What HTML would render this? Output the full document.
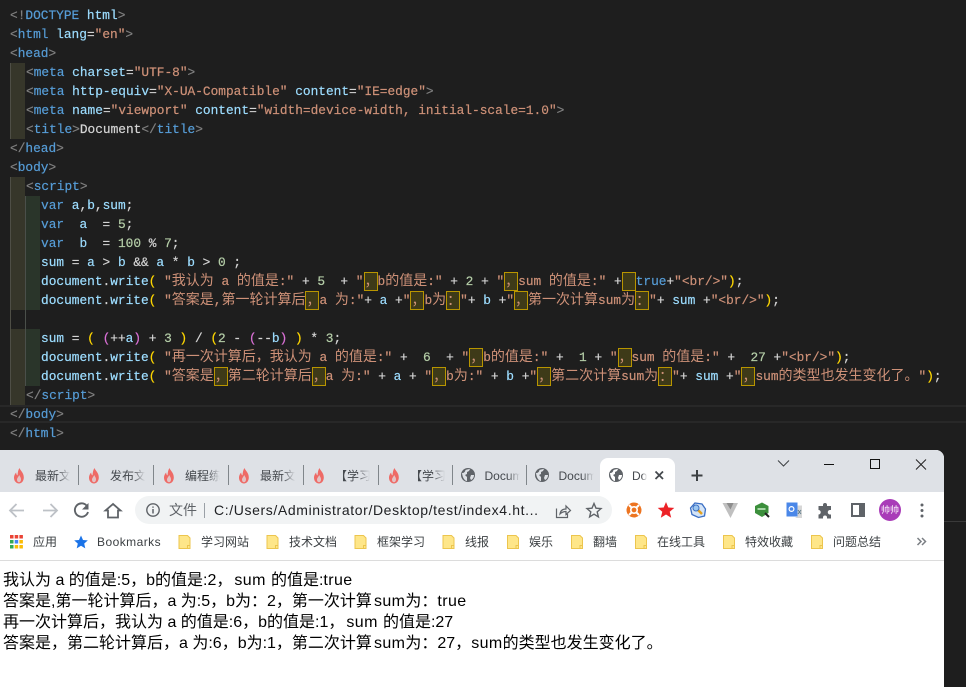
<!DOCTYPE html>
<html lang="zh"><head><meta charset="utf-8"><title>Document</title>
<style>
html,body{margin:0;padding:0;background:#1e1e1e}
#r{position:relative;width:966px;height:687px;overflow:hidden;background:#1e1e1e}
.a{position:absolute}
.l{position:absolute;white-space:pre;height:19px;line-height:19px;font-family:"Liberation Mono","Noto Sans CJK SC",monospace;font-size:12.825px;color:#d4d4d4;-webkit-text-stroke:.2px}
.l i{font-style:normal}
em{font-style:normal;font-size:14px;font-family:"Noto Sans CJK SC",sans-serif;line-height:0;-webkit-text-stroke:0}
.g{color:#808080}.t{color:#569cd6}.n{color:#9cdcfe}.s{color:#ce9178}.w{color:#d4d4d4}.d{color:#b5cea8}.y{color:#ffd700}.p{color:#da70d6}.u{color:#179fff}
.x{display:inline-block;box-sizing:border-box;width:14px;height:19px;border:1px solid #b89500;background:#3e3a18;vertical-align:top;font-size:14px;line-height:16px;text-align:left;overflow:hidden;font-family:"Noto Sans CJK SC",sans-serif;color:#ce9178;-webkit-text-stroke:0}
.ui{font-family:"Liberation Sans","Noto Sans CJK SC",sans-serif;white-space:pre;position:absolute}
.tb{font-size:12px;color:#45494e;top:468px;height:16px;line-height:16px;overflow:hidden;-webkit-mask-image:linear-gradient(90deg,#000 65%,transparent);mask-image:linear-gradient(90deg,#000 65%,transparent)}
.sep{position:absolute;top:465px;width:1px;height:20px;background:#80868b}
.bm{font-size:12px;color:#3c4043;top:534px;line-height:16px}
.ct{position:absolute;left:3px;font-family:"Liberation Sans","Noto Sans CJK SC",sans-serif;font-size:16px;line-height:21px;color:#000;white-space:pre}
.ct b{font-weight:normal;letter-spacing:.4px}
.ct b.m{margin-left:2px}
.ct b.e{margin-right:.7px}
svg{position:absolute;overflow:visible}
</style></head><body><div id="r">

<div class="a" style="left:10px;top:63px;width:15px;height:76px;background:#36362a"></div>
<div class="a" style="left:10px;top:177px;width:15px;height:133px;background:#36362a"></div>
<div class="a" style="left:10px;top:329px;width:15px;height:76px;background:#36362a"></div>
<div class="a" style="left:25px;top:196px;width:15px;height:114px;background:#2a352a"></div>
<div class="a" style="left:25px;top:329px;width:15px;height:57px;background:#2a352a"></div>
<div class="a" style="left:10px;top:63px;width:1px;height:76px;background:#4e4e46"></div>
<div class="a" style="left:10px;top:177px;width:1px;height:228px;background:#4e4e46"></div>
<div class="a" style="left:25px;top:196px;width:1px;height:190px;background:#4a4f4a"></div>
<div class="a" style="left:0;top:405px;width:966px;height:18px;box-sizing:border-box;border-top:2px solid #282828;border-bottom:2px solid #282828"></div>

<div class="l" style="left:10px;top:6px"><i class=g>&lt;!</i><i class=t>DOCTYPE</i> <i class=n>html</i><i class=g>&gt;</i></div>
<div class="l" style="left:10px;top:25px"><i class=g>&lt;</i><i class=t>html</i> <i class=n>lang</i>=<i class=s>"en"</i><i class=g>&gt;</i></div>
<div class="l" style="left:10px;top:44px"><i class=g>&lt;</i><i class=t>head</i><i class=g>&gt;</i></div>
<div class="l" style="left:26px;top:63px"><i class=g>&lt;</i><i class=t>meta</i> <i class=n>charset</i>=<i class=s>"UTF-8"</i><i class=g>&gt;</i></div>
<div class="l" style="left:26px;top:82px"><i class=g>&lt;</i><i class=t>meta</i> <i class=n>http-equiv</i>=<i class=s>"X-UA-Compatible"</i> <i class=n>content</i>=<i class=s>"IE=edge"</i><i class=g>&gt;</i></div>
<div class="l" style="left:26px;top:101px"><i class=g>&lt;</i><i class=t>meta</i> <i class=n>name</i>=<i class=s>"viewport"</i> <i class=n>content</i>=<i class=s>"width=device-width, initial-scale=1.0"</i><i class=g>&gt;</i></div>
<div class="l" style="left:26px;top:120px"><i class=g>&lt;</i><i class=t>title</i><i class=g>&gt;</i>Document<i class=g>&lt;/</i><i class=t>title</i><i class=g>&gt;</i></div>
<div class="l" style="left:10px;top:139px"><i class=g>&lt;/</i><i class=t>head</i><i class=g>&gt;</i></div>
<div class="l" style="left:10px;top:158px"><i class=g>&lt;</i><i class=t>body</i><i class=g>&gt;</i></div>
<div class="l" style="left:26px;top:177px"><i class=g>&lt;</i><i class=t>script</i><i class=g>&gt;</i></div>
<div class="l" style="left:41px;top:196px"><i class=t>var</i> <i class=n>a</i>,<i class=n>b</i>,<i class=n>sum</i>;</div>
<div class="l" style="left:41px;top:215px"><i class=t>var</i>  <i class=n>a</i>  = <i class=d>5</i>;</div>
<div class="l" style="left:41px;top:234px"><i class=t>var</i>  <i class=n>b</i>  = <i class=d>100</i> % <i class=d>7</i>;</div>
<div class="l" style="left:41px;top:253px"><i class=n>sum</i> = <i class=n>a</i> &gt; <i class=n>b</i> &amp;&amp; <i class=n>a</i> * <i class=n>b</i> &gt; <i class=d>0</i> ;</div>
<div class="l" style="left:41px;top:272px"><i class=n>document</i>.<i class=n>write</i><i class=y>(</i> <i class=s>"<em>我认为</em> a <em>的值是</em>:"</i> + <i class=d>5</i>  + <i class=s>"<span class=x>，</span>b<em>的值是</em>:"</i> + <i class=d>2</i> + <i class=s>"<span class=x>，</span>sum <em>的值是</em>:"</i> +<span class=x></span><i class=t>true</i>+<i class=s>"&lt;br/&gt;"</i><i class=y>)</i>;</div>
<div class="l" style="left:41px;top:291px"><i class=n>document</i>.<i class=n>write</i><i class=y>(</i> <i class=s>"<em>答案是</em>,<em>第一轮计算后</em><span class=x>，</span>a <em>为</em>:"</i>+ <i class=n>a</i> +<i class=s>"<span class=x>，</span>b<em>为</em><span class=x>：</span>"</i>+ <i class=n>b</i> +<i class=s>"<span class=x>，</span><em>第一次计算</em>sum<em>为</em><span class=x>：</span>"</i>+ <i class=n>sum</i> +<i class=s>"&lt;br/&gt;"</i><i class=y>)</i>;</div>
<div class="l" style="left:41px;top:329px"><i class=n>sum</i> = <i class=y>(</i> <i class=p>(</i>++<i class=n>a</i><i class=p>)</i> + <i class=d>3</i> <i class=y>)</i> / <i class=y>(</i><i class=d>2</i> - <i class=p>(</i>--<i class=n>b</i><i class=p>)</i> <i class=y>)</i> * <i class=d>3</i>;</div>
<div class="l" style="left:41px;top:348px"><i class=n>document</i>.<i class=n>write</i><i class=y>(</i> <i class=s>"<em>再一次计算后，我认为</em> a <em>的值是</em>:"</i> +  <i class=d>6</i>  + <i class=s>"<span class=x>，</span>b<em>的值是</em>:"</i> +  <i class=d>1</i> + <i class=s>"<span class=x>，</span>sum <em>的值是</em>:"</i> +  <i class=d>27</i> +<i class=s>"&lt;br/&gt;"</i><i class=y>)</i>;</div>
<div class="l" style="left:41px;top:367px"><i class=n>document</i>.<i class=n>write</i><i class=y>(</i> <i class=s>"<em>答案是</em><span class=x>，</span><em>第二轮计算后</em><span class=x>，</span>a <em>为</em>:"</i> + <i class=n>a</i> + <i class=s>"<span class=x>，</span>b<em>为</em>:"</i> + <i class=n>b</i> +<i class=s>"<span class=x>，</span><em>第二次计算</em>sum<em>为</em><span class=x>：</span>"</i>+ <i class=n>sum</i> +<i class=s>"<span class=x>，</span>sum<em>的类型也发生变化了。</em>"</i><i class=y>)</i>;</div>
<div class="l" style="left:26px;top:386px"><i class=g>&lt;/</i><i class=t>script</i><i class=g>&gt;</i></div>
<div class="l" style="left:10px;top:405px"><i class=g>&lt;/</i><i class=t>body</i><i class=g>&gt;</i></div>
<div class="l" style="left:10px;top:424px"><i class=g>&lt;/</i><i class=t>html</i><i class=g>&gt;</i></div>

<div class="a" style="left:944px;top:521px;width:22px;height:1px;background:#3a3a3a"></div>

<!-- browser -->
<div class="a" style="left:0;top:450px;width:944px;height:237px;background:#fff;border-radius:0 8px 0 0;overflow:hidden">
  <div class="a" style="left:0;top:0;width:944px;height:42px;background:#dee1e6"></div>
</div>
<div class="a" style="left:600px;top:458px;width:75px;height:34px;background:#fff;border-radius:8px 8px 0 0"></div>
<div class="a" style="left:135px;top:496px;width:477px;height:28px;background:#f1f3f4;border-radius:14px"></div>
<div class="a" style="left:0;top:560px;width:944px;height:1px;background:#dcdcdc"></div>

<!-- tabs -->
<svg style="left:0;top:0" width="966" height="687">
<defs>
<g id="fl"><path d="M0.5-8C1.5-5 4.8-3.5 4.8 1.5 4.8 5 2.6 7.5 0 7.5-2.8 7.5-5 5-5 1.8-5-.5-3.8-2.5-2.8-3.5-2.8-2-2.3-1-1.5-.6-1.2-3.5-1-6 .5-8Z" fill="#ee6a66"/><path d="M.2-1C1 .5 2 1.6 2 3.4 2 5 1.2 6.2 0 6.2-1.2 6.2-2 5-2 3.6-2 2-.6 1 .2-1Z" fill="#dee1e6" opacity=".75"/></g>
<g id="gl"><circle r="7" fill="#5f6368"/><path d="M-6-2C-4-2-3-3-2.5-5-1-5.5.5-6 2-6L1-4-1-3-1-1-3 0-1 2-1 6C-3 6-5.500 3-6-2ZM3 0 6 0C6 2 5 4 3 5L2 3Z" fill="#dee1e6"/></g>
<g id="fd"><path d="M-5.500-6.500H3L5.500-4V6.500H-5.500Z" fill="#fee689" stroke="#ecc54e" stroke-width="1"/><rect x="3" y="3.500" width="2.500" height="3" fill="none" stroke="#ecc54e" stroke-width="1"/></g>
</defs>
<use href="#fl" x="19" y="476"/><use href="#fl" x="94" y="476"/><use href="#fl" x="169" y="476"/><use href="#fl" x="244" y="476"/><use href="#fl" x="319" y="476"/><use href="#fl" x="394" y="476"/>
<use href="#gl" x="468" y="475"/><use href="#gl" x="542" y="475"/>
<g transform="translate(616 475)"><circle r="7" fill="#5f6368"/><path d="M-6-2C-4-2-3-3-2.500-5-1-5.500.5-6 2-6L1-4-1-3-1-1-3 0-1 2-1 6C-3 6-5.500 3-6-2ZM3 0 6 0C6 2 5 4 3 5L2 3Z" fill="#fff"/></g>
<path d="M655.500 471.500l7.500 7.500M663 471.500l-7.500 7.500" stroke="#45494e" stroke-width="1.800" fill="none"/>
<path d="M697 470v11M691.500 475.500h11" stroke="#3c4043" stroke-width="2" fill="none"/>
<path d="M778 460.500l5.500 5.500 5.500-5.500" stroke="#3c4043" stroke-width="1" fill="none"/>
<path d="M824 464.500h10" stroke="#111" stroke-width="1" fill="none"/>
<rect x="870.500" y="459.500" width="9" height="9" fill="none" stroke="#111" stroke-width="1"/>
<path d="M916 459.500l10 10M926 459.500l-10 10" stroke="#222" stroke-width="1" fill="none"/>

<!-- nav -->
<path d="M24 510.500H11M16.500 504l-6.500 6.500 6.500 6.500" stroke="#bdc1c6" stroke-width="1.800" fill="none"/>
<path d="M43 510.500H56M50.500 504l6.500 6.500-6.500 6.500" stroke="#bdc1c6" stroke-width="1.800" fill="none"/>
<path d="M86.500 505.500A6.700 6.700 0 1 0 88 512" stroke="#5f6368" stroke-width="1.900" fill="none"/><path d="M88.500 503v6.500H82Z" fill="#5f6368"/>
<path d="M113 504l-7.500 6.500H108v7h10v-7h2.500Z" fill="none" stroke="#5f6368" stroke-width="1.800"/>
<circle cx="153" cy="510" r="6.200" fill="none" stroke="#5f6368" stroke-width="1.400"/><path d="M153 509v4.500M153 506.500v1.200" stroke="#5f6368" stroke-width="1.500"/>
<path d="M204.500 503v15" stroke="#9aa0a6" stroke-width="1"/>
<path d="M556.500 508.500v9h11v-3.500M560 514c.5-3.500 3-5 6-5v-3l4.500 4.500-4.500 4v-3c-2.500 0-4.500 1-6 2.500Z" fill="none" stroke="#5f6368" stroke-width="1.200"/>
<path d="M594 503.500l2 4.700 5 .4-3.800 3.300 1.200 5-4.400-2.700-4.400 2.700 1.200-5-3.800-3.300 5-.4Z" fill="none" stroke="#5f6368" stroke-width="1.400"/>

<!-- extensions -->
<circle cx="634" cy="510" r="7.500" fill="#ed7420"/><circle cx="634" cy="510" r="3.200" fill="none" stroke="#fff" stroke-width="1.600"/><path d="M629 505l2.500 2.500M639 505l-2.500 2.500M629 515l2.500-2.500M639 515l-2.500-2.500" stroke="#fff" stroke-width="2"/>
<path d="M666 502l2.300 5.500 6 .4-4.600 3.900 1.500 5.900-5.200-3.200-5.200 3.200 1.500-5.900-4.600-3.900 6-.4Z" fill="#ec2227"/>
<path d="M695 503l7 1 3.500 5-1 7-6 1.500-6.500-3-1.500-6.500Z" fill="#d4e4f7" stroke="#3b6fc4" stroke-width="1.300"/><path d="M698 510l4 4" stroke="#e3a11e" stroke-width="2.500"/><circle cx="696" cy="508" r="3" fill="#9cc7f0" stroke="#3b6fc4"/>
<path d="M722.500 503H738L730.500 518Z" fill="#c0c0c0"/><path d="M726.500 503h7l-3 6.500Z" fill="#8d8d8d"/>
<path d="M762 502.500l6.500 3.500v7l-6.500 4-7-4v-7Z" fill="#3c8f3c"/><path d="M757.500 509h8" stroke="#a6d6a6" stroke-width="2"/><path d="M765 513l4 4" stroke="#222" stroke-width="2"/>
<rect x="786.500" y="502.500" width="11" height="14" fill="#4a87e8"/><path d="M797.500 505.500h4.500v12.500h-7l2.500-1.500Z" fill="#d7d7d7"/><circle cx="791.500" cy="509" r="2.400" fill="none" stroke="#fff" stroke-width="1.200"/><path d="M798 510l3 4M801 510l-3 4" stroke="#607d8b" stroke-width="1"/>
<path d="M819 506h4v-1a2 2 0 0 1 4 0v1h4v4h-1a2.200 2.200 0 0 0 0 4.500h1v4h-4v-1a2 2 0 0 0-4 0v1h-4.500v-4a2.200 2.200 0 0 0 0-4.500V506Z" fill="#5f6368"/>
<rect x="852" y="504" width="12" height="12" fill="#fff" stroke="#5f6368" stroke-width="2"/><rect x="859" y="504" width="5" height="12" fill="#5f6368"/>
<circle cx="890" cy="510" r="11" fill="#a93cb8"/>
<circle cx="922" cy="505" r="1.500" fill="#5f6368"/><circle cx="922" cy="510.500" r="1.500" fill="#5f6368"/><circle cx="922" cy="516" r="1.500" fill="#5f6368"/>

<!-- bookmarks -->
<g><rect x="10" y="535" width="3.500" height="3.500" fill="#ea4335"/><rect x="14.700" y="535" width="3.500" height="3.500" fill="#ea4335"/><rect x="19.400" y="535" width="3.500" height="3.500" fill="#ea4335"/>
<rect x="10" y="540" width="3.500" height="3.500" fill="#34a853"/><rect x="14.700" y="540" width="3.500" height="3.500" fill="#4285f4"/><rect x="19.400" y="540" width="3.500" height="3.500" fill="#fbbc05"/>
<rect x="10" y="545" width="3.500" height="3.500" fill="#34a853"/><rect x="14.700" y="545" width="3.500" height="3.500" fill="#fbbc05"/><rect x="19.400" y="545" width="3.500" height="3.500" fill="#fbbc05"/></g>
<path d="M81 535.500l2 4.500 4.800.4-3.600 3.200 1.100 4.800-4.300-2.600-4.300 2.600 1.100-4.800-3.600-3.200 4.800-.4Z" fill="#1a73e8"/>
<use href="#fd" x="184.500" y="542"/><use href="#fd" x="272.500" y="542"/><use href="#fd" x="360.500" y="542"/><use href="#fd" x="448.500" y="542"/><use href="#fd" x="513" y="542"/><use href="#fd" x="577" y="542"/><use href="#fd" x="641" y="542"/><use href="#fd" x="729" y="542"/><use href="#fd" x="817" y="542"/>
<path d="M917.500 538l3.500 3.500-3.500 3.500M922 538l3.500 3.500-3.500 3.500" stroke="#7b7f84" stroke-width="1.500" fill="none"/>
</svg>

<div class="ui tb" style="left:35px;width:35px">最新文章</div><div class="sep" style="left:78px"></div>
<div class="ui tb" style="left:110px;width:35px">发布文章</div><div class="sep" style="left:153px"></div>
<div class="ui tb" style="left:185px;width:35px">编程练习</div><div class="sep" style="left:228px"></div>
<div class="ui tb" style="left:260px;width:35px">最新文章</div><div class="sep" style="left:303px"></div>
<div class="ui tb" style="left:335px;width:35px">【学习笔记</div><div class="sep" style="left:378px"></div>
<div class="ui tb" style="left:410px;width:35px">【学习笔记</div><div class="sep" style="left:452px"></div>
<div class="ui tb" style="left:484.500px;width:35px">Document</div><div class="sep" style="left:526px"></div>
<div class="ui tb" style="left:558.500px;width:35px">Document</div>
<div class="ui tb" style="left:632px;width:15px">Document</div>

<div class="ui" style="left:169px;top:502px;font-size:14px;line-height:16px;color:#5f6368">文件</div>
<div class="ui" style="left:214px;top:502px;font-size:14px;line-height:16px;color:#202124;letter-spacing:.62px">C:/Users/Administrator/Desktop/test/index4.ht...</div>

<div class="ui bm" style="left:33px">应用</div>
<div class="ui bm" style="left:97px;letter-spacing:.45px">Bookmarks</div>
<div class="ui bm" style="left:201px">学习网站</div>
<div class="ui bm" style="left:289px">技术文档</div>
<div class="ui bm" style="left:377px">框架学习</div>
<div class="ui bm" style="left:465px">线报</div>
<div class="ui bm" style="left:529px">娱乐</div>
<div class="ui bm" style="left:593px">翻墙</div>
<div class="ui bm" style="left:657px">在线工具</div>
<div class="ui bm" style="left:745px">特效收藏</div>
<div class="ui bm" style="left:833px">问题总结</div>
<div class="ui" style="left:879px;top:503px;font-size:9px;line-height:14px;color:#fff;width:22px;text-align:center">帅帅</div>

<div class="ct" style="top:570px">我认为 a 的值是:5，b的值是:2，<b class="m e">sum</b> 的值是:<b>true</b></div>
<div class="ct" style="top:591px">答案是,第一轮计算后，a 为:5，b为：2，第一次计算<b class="m">sum</b>为：<b>true</b></div>
<div class="ct" style="top:612px">再一次计算后，我认为 a 的值是:6，b的值是:1，<b class="m e">sum</b> 的值是:27</div>
<div class="ct" style="top:633px">答案是，第二轮计算后，a 为:6，b为:1，第二次计算<b class="m">sum</b>为：27，<b>sum</b>的类型也发生变化了。</div>

</div></body></html>
